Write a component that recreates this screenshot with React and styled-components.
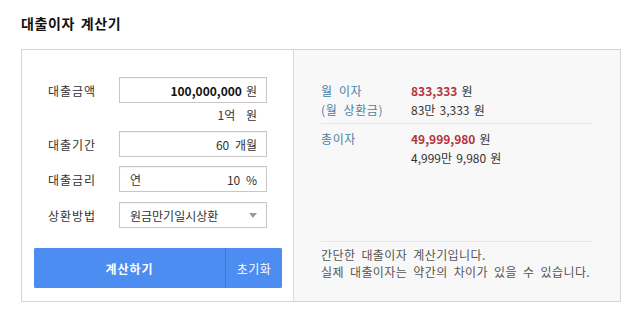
import React, { useState } from 'react';
import styled, { createGlobalStyle } from 'styled-components';

const GlobalStyle = createGlobalStyle`
  body {
    margin: 0;
    background: #fff;
    font-family: "Noto Sans CJK KR", "Noto Sans", sans-serif;
    font-size: 12px;
    color: #333;
    word-spacing: 3px;
  }
`;

const Page = styled.div`
  padding: 14px 16px 0 21px;
  width: 600px;
`;

const Title = styled.h2`
  margin: 0;
  font-size: 14px;
  line-height: 18px;
  font-weight: bold;
  color: #111;
  letter-spacing: 0.6px;
  word-spacing: 2px;
`;

const Card = styled.div`
  margin-top: 17px;
  display: flex;
  width: 600px;
  height: 253px;
  box-sizing: border-box;
  border: 1px solid #d4d4d4;
`;

const FormPanel = styled.div`
  width: 272px;
  border-right: 1px solid #dcdcdc;
  padding: 27px 11px 0 12px;
  box-sizing: border-box;
  background: #fff;
  display: flex;
  flex-direction: column;
`;

const Row = styled.div`
  display: flex;
  align-items: center;
  padding-left: 14px;
  margin-top: ${(p) => p.$gap || 0}px;
`;

const Label = styled.div`
  width: 71px;
  color: #333;
  letter-spacing: 1px;
`;

const Field = styled.div`
  width: 148px;
  height: 26px;
  box-sizing: border-box;
  border: 1px solid #c7c7c7;
  display: flex;
  align-items: center;
  justify-content: ${(p) => (p.$spread ? 'space-between' : 'flex-end')};
  padding: 0 9px 0 10px;
  color: #333;
  background: #fff;
  box-shadow: inset 0 1px 1px rgba(0, 0, 0, 0.04);
`;

const Amount = styled.b`
  color: #111;
  margin-right: 4px;
  font-weight: bold;
`;

const Helper = styled.div`
  height: 28px;
  line-height: 24px;
  text-align: right;
  padding-right: 25px;
  color: #333;
  word-spacing: 8px;
`;

const Arrow = styled.span`
  width: 0;
  height: 0;
  border-left: 4px solid transparent;
  border-right: 4px solid transparent;
  border-top: 5px solid #9a9a9a;
`;

const ButtonBar = styled.div`
  margin-top: 20px;
  display: flex;
  height: 40px;
  border-radius: 2px;
  overflow: hidden;
  background: #4d8cf0;
`;

const CalcButton = styled.button`
  flex: 1;
  border: 0;
  background: #4d8cf0;
  color: #fff;
  font-family: inherit;
  font-size: 12px;
  font-weight: bold;
  letter-spacing: 1px;
  cursor: pointer;
  border-right: 1px solid #3c77d6;
`;

const ResetButton = styled.button`
  width: 56px;
  border: 0;
  background: #4d8cf0;
  color: #fff;
  font-family: inherit;
  font-size: 12px;
  letter-spacing: 0.5px;
  cursor: pointer;
`;

const ResultPanel = styled.div`
  flex: 1;
  background: #f8f8f8;
  padding: 31px 27px 21px 27px;
  display: flex;
  flex-direction: column;
`;

const ResultRow = styled.div`
  display: flex;
  line-height: 19px;
`;

const ResultLabel = styled.div`
  width: 90px;
  color: #4883a8;
  letter-spacing: 0.6px;
`;

const Value = styled.div`
  color: #333;
  word-spacing: 1.5px;
`;

const Red = styled.b`
  color: #b5343c;
  font-weight: bold;
  margin-right: 4px;
`;

const Divider = styled.div`
  height: 1px;
  background: #e6e6e6;
  margin: ${(p) => p.$m || '4px 0 5px'};
`;

const Notes = styled.div`
  margin-top: auto;
`;

const Note = styled.p`
  margin: 0;
  line-height: 17px;
  color: #555;
  letter-spacing: 0.4px;
`;

export default function App() {
  const [amount] = useState('100,000,000');

  return (
    <>
      <GlobalStyle />
      <Page>
        <Title>대출이자 계산기</Title>
        <Card>
          <FormPanel>
            <Row>
              <Label>대출금액</Label>
              <Field>
                <Amount>{amount}</Amount>원
              </Field>
            </Row>
            <Helper>1억 원</Helper>
            <Row>
              <Label>대출기간</Label>
              <Field>60 개월</Field>
            </Row>
            <Row $gap={9}>
              <Label>대출금리</Label>
              <Field $spread>
                <span>연</span>
                <span>10 %</span>
              </Field>
            </Row>
            <Row $gap={10}>
              <Label>상환방법</Label>
              <Field $spread>
                <span>원금만기일시상환</span>
                <Arrow />
              </Field>
            </Row>
            <ButtonBar>
              <CalcButton>계산하기</CalcButton>
              <ResetButton>초기화</ResetButton>
            </ButtonBar>
          </FormPanel>
          <ResultPanel>
            <ResultRow>
              <ResultLabel>월 이자</ResultLabel>
              <Value>
                <Red>833,333</Red>원
              </Value>
            </ResultRow>
            <ResultRow>
              <ResultLabel>(월 상환금)</ResultLabel>
              <Value>83만 3,333 원</Value>
            </ResultRow>
            <Divider />
            <ResultRow>
              <ResultLabel>총이자</ResultLabel>
              <Value>
                <Red>49,999,980</Red>원
              </Value>
            </ResultRow>
            <ResultRow>
              <ResultLabel />
              <Value>4,999만 9,980 원</Value>
            </ResultRow>
            <Notes>
              <Divider $m="0 0 4px" />
              <Note>간단한 대출이자 계산기입니다.</Note>
              <Note>실제 대출이자는 약간의 차이가 있을 수 있습니다.</Note>
            </Notes>
          </ResultPanel>
        </Card>
      </Page>
    </>
  );
}
